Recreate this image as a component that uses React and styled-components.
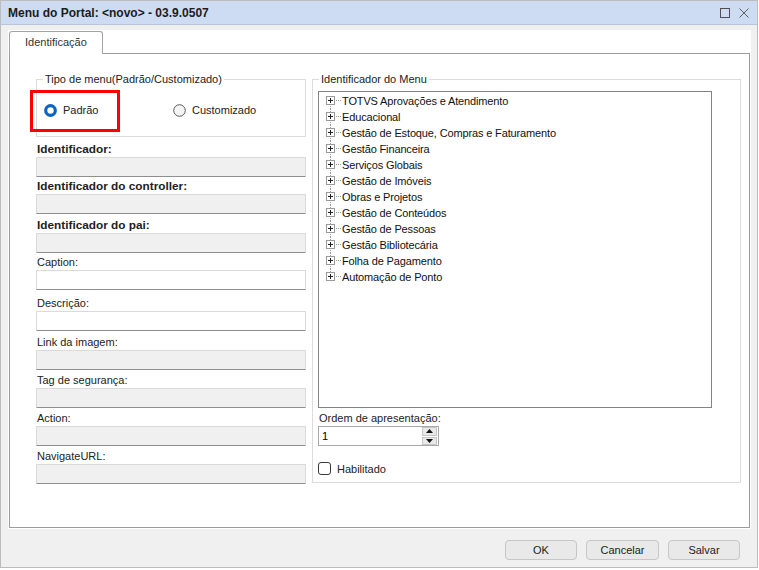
import React from 'react';
import styled, { createGlobalStyle } from 'styled-components';

const GlobalStyle = createGlobalStyle`
  html, body { margin: 0; padding: 0; background: #ffffff; }
  body { font-family: "Liberation Sans", Arial, sans-serif; font-size: 11px; color: #000; }
  * { box-sizing: border-box; }
`;

const Window = styled.div`
  width: 758px;
  height: 568px;
  border: 1px solid #bcbcbc;
  background: #f0f0f0;
  display: flex;
  flex-direction: column;
`;

const TitleBar = styled.div`
  height: 24px;
  background: #cddcf3;
  border-bottom: 1px solid #b9c6da;
  display: flex;
  align-items: center;
  justify-content: space-between;
  padding: 0 8px 0 7px;
`;

const Title = styled.div`
  font-weight: bold;
  font-size: 12px;
  color: #1c1c1c;
`;

const TitleButtons = styled.div`
  display: flex;
  align-items: center;
  gap: 9px;
`;

const Body = styled.div`
  flex: 1;
  display: flex;
  flex-direction: column;
  padding: 5px 6px 0 7px;
`;

const TabArea = styled.div`
  width: 743px;
  height: 499px;
  background: #ffffff;
  padding: 1px;
  display: flex;
  flex-direction: column;
`;

const TabStrip = styled.div`
  display: flex;
  align-items: flex-end;
  height: 22px;
`;

const Tab = styled.div`
  position: relative;
  z-index: 1;
  height: 23px;
  margin-bottom: -1px;
  padding: 4px 15px 0 15px;
  background: #ffffff;
  border: 1px solid #a3a3a3;
  border-bottom: none;
  border-radius: 3px 3px 0 0;
  color: #333;
  font-size: 11px;
  line-height: 13px;
`;

const TabPage = styled.div`
  flex: 1;
  border: 1px solid #9c9c9c;
  display: flex;
  gap: 6px;
  padding: 19px 0 0 26px;
`;

const LeftColumn = styled.div`
  width: 270px;
  display: flex;
  flex-direction: column;
`;

const Group = styled.fieldset`
  margin: 0;
  width: ${p => p.$width}px;
  height: ${p => p.$height}px;
  border: 1px solid #dcdcdc;
  padding: 0 0 0 5px;
  min-width: 0;
`;

const GroupCaption = styled.legend`
  margin-left: 1px;
  padding: 0 2px;
  font-size: 11px;
  line-height: 13px;
  color: #222;
`;

const RadioRow = styled.div`
  display: grid;
  grid-template-columns: 129px auto;
  align-items: center;
  padding: 14px 0 0 2px;
`;

const RadioOption = styled.label`
  position: relative;
  display: flex;
  align-items: center;
  gap: 6px;
  height: 20px;
  font-size: 11px;
  color: #222;
`;

const Highlight = styled.span`
  position: absolute;
  left: -14px;
  top: -10px;
  width: 90px;
  height: 42px;
  border: 3px solid #ff0000;
  pointer-events: none;
`;

const FieldLabel = styled.div`
  margin-top: ${p => p.$gap}px;
  margin-bottom: 1px;
  font-size: ${p => (p.$bold ? '11.8px' : '11px')};
  font-weight: ${p => (p.$bold ? 'bold' : 'normal')};
  line-height: 13px;
  color: #222;
  white-space: nowrap;
  padding-left: 1px;
`;

const TextBox = styled.div`
  height: 20px;
  width: 270px;
  background: ${p => (p.$disabled ? '#f0f0f0' : '#ffffff')};
  border: 1px solid #dadada;
  border-bottom: 1px solid #8f8f8f;
  border-radius: 1px;
`;

const TreeBox = styled.div`
  width: 394px;
  height: 317px;
  margin-top: 5px;
  border: 1px solid #838383;
  background: #fff;
  padding: 1px 0 0 7px;
  font-size: 11px;
  letter-spacing: -0.14px;
  color: #111;
`;

const TreeRow = styled.div`
  display: flex;
  align-items: center;
  height: 16px;
  white-space: nowrap;
`;

const SpinBox = styled.div`
  width: 121px;
  height: 20px;
  border: 1px solid #a9a9a9;
  background: #fff;
  display: flex;
  align-items: center;
  justify-content: space-between;
  padding: 0 0 0 3px;
  font-size: 11px;
`;

const SpinButtons = styled.div`
  display: flex;
  flex-direction: column;
  gap: 1px;
  width: 15px;
  height: 18px;
  margin-right: 1px;
`;

const SpinButton = styled.div`
  flex: 1;
  background: #e8e8e8;
  border: 1px solid #c6c6c6;
  display: flex;
  align-items: center;
  justify-content: center;
`;

const CheckRow = styled.label`
  display: flex;
  align-items: center;
  gap: 6px;
  margin-top: 16px;
  font-size: 11px;
  color: #222;
`;

const CheckBox = styled.span`
  width: 13px;
  height: 13px;
  border: 1px solid #3a3a3a;
  border-radius: 3px;
  background: #fff;
`;

const Footer = styled.div`
  display: flex;
  justify-content: flex-end;
  gap: 9px;
  padding: 11px 11px 0 0;
`;

const Button = styled.button`
  width: ${p => p.$width || 72}px;
  height: 20px;
  background: #e9e9e9;
  border: 1px solid #c6c6c6;
  border-radius: 4px;
  font-family: "Liberation Sans", Arial, sans-serif;
  font-size: 11px;
  color: #222;
  padding: 0;
`;

const TreeIcon = ({ first, last }) => (
  <svg width="16" height="16" viewBox="0 0 16 16" style={{ flex: 'none' }}>
    {!first && <line x1="4.5" y1="0" x2="4.5" y2="3" stroke="#9a9a9a" strokeDasharray="1 1" />}
    {!last && <line x1="4.5" y1="13" x2="4.5" y2="16" stroke="#9a9a9a" strokeDasharray="1 1" />}
    <rect x="0.5" y="3.5" width="8" height="8" fill="#fff" stroke="#9a9a9a" />
    <line x1="2" y1="7.5" x2="7" y2="7.5" stroke="#222" />
    <line x1="4.5" y1="5" x2="4.5" y2="10" stroke="#222" />
    <line x1="10" y1="7.5" x2="16" y2="7.5" stroke="#9a9a9a" strokeDasharray="1 1" />
  </svg>
);

const RadioIcon = ({ checked }) => (
  <svg width="13" height="13" viewBox="0 0 13 13">
    {checked ? (
      <circle cx="6.5" cy="6.5" r="4.8" fill="#fff" stroke="#0a64c6" strokeWidth="3.2" />
    ) : (
      <circle cx="6.5" cy="6.5" r="5.8" fill="#f4f4f4" stroke="#5a5a5a" strokeWidth="1" />
    )}
  </svg>
);

const menuItems = [
  'TOTVS Aprovações e Atendimento',
  'Educacional',
  'Gestão de Estoque, Compras e Faturamento',
  'Gestão Financeira',
  'Serviços Globais',
  'Gestão de Imóveis',
  'Obras e Projetos',
  'Gestão de Conteúdos',
  'Gestão de Pessoas',
  'Gestão Bibliotecária',
  'Folha de Pagamento',
  'Automação de Ponto',
];

const fields = [
  { label: 'Identificador:', bold: true, disabled: true, gap: 6 },
  { label: 'Identificador do controller:', bold: true, disabled: true, gap: 3 },
  { label: 'Identificador do pai:', bold: true, disabled: true, gap: 5 },
  { label: 'Caption:', disabled: false, gap: 3 },
  { label: 'Descrição:', disabled: false, gap: 7 },
  { label: 'Link da imagem:', disabled: true, gap: 5 },
  { label: 'Tag de segurança:', disabled: true, gap: 4 },
  { label: 'Action:', disabled: true, gap: 4 },
  { label: 'NavigateURL:', disabled: true, gap: 4 },
];

export default function App() {
  return (
    <>
      <GlobalStyle />
      <Window>
        <TitleBar>
          <Title>Menu do Portal: &lt;novo&gt; - 03.9.0507</Title>
          <TitleButtons>
            <svg width="10" height="10" viewBox="0 0 10 10">
              <rect x="0.5" y="0.5" width="9" height="9" fill="none" stroke="#505050" />
            </svg>
            <svg width="10" height="10" viewBox="0 0 10 10">
              <path d="M0.5 0.5 L9.5 9.5 M9.5 0.5 L0.5 9.5" stroke="#606060" strokeWidth="1" />
            </svg>
          </TitleButtons>
        </TitleBar>
        <Body>
          <TabArea>
            <TabStrip>
              <Tab>Identificação</Tab>
            </TabStrip>
            <TabPage>
              <LeftColumn>
                <Group $width={270} $height={64}>
                  <GroupCaption>Tipo de menu(Padrão/Customizado)</GroupCaption>
                  <RadioRow>
                    <RadioOption>
                      <RadioIcon checked />
                      Padrão
                      <Highlight />
                    </RadioOption>
                    <RadioOption>
                      <RadioIcon />
                      Customizado
                    </RadioOption>
                  </RadioRow>
                </Group>
                {fields.map(f => (
                  <React.Fragment key={f.label}>
                    <FieldLabel $bold={f.bold} $gap={f.gap}>{f.label}</FieldLabel>
                    <TextBox $disabled={f.disabled} />
                  </React.Fragment>
                ))}
              </LeftColumn>
              <Group $width={429} $height={410}>
                <GroupCaption>Identificador do Menu</GroupCaption>
                <TreeBox>
                  {menuItems.map((item, i) => (
                    <TreeRow key={item}>
                      <TreeIcon first={i === 0} last={i === menuItems.length - 1} />
                      {item}
                    </TreeRow>
                  ))}
                </TreeBox>
                <FieldLabel $gap={4}>Ordem de apresentação:</FieldLabel>
                <SpinBox>
                  1
                  <SpinButtons>
                    <SpinButton>
                      <svg width="7" height="4" viewBox="0 0 7 4"><path d="M3.5 0 L7 4 L0 4 Z" fill="#111" /></svg>
                    </SpinButton>
                    <SpinButton>
                      <svg width="7" height="4" viewBox="0 0 7 4"><path d="M0 0 L7 0 L3.5 4 Z" fill="#111" /></svg>
                    </SpinButton>
                  </SpinButtons>
                </SpinBox>
                <CheckRow>
                  <CheckBox />
                  Habilitado
                </CheckRow>
              </Group>
            </TabPage>
          </TabArea>
          <Footer>
            <Button>OK</Button>
            <Button $width={73}>Cancelar</Button>
            <Button>Salvar</Button>
          </Footer>
        </Body>
      </Window>
    </>
  );
}
